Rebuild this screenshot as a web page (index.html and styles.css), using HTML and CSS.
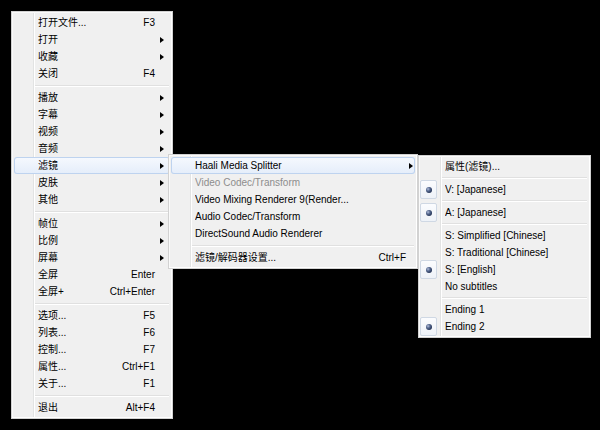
FILE: index.html
```html
<!DOCTYPE html>
<html lang="zh-CN">
<head>
<meta charset="utf-8">
<title>Menu</title>
<link rel="stylesheet" href="styles.css">
</head>
<body>
<div class="stage">
  <div class="menu menu-main">
    <div class="item"><span class="label">打开文件...</span><span class="key">F3</span><span class="sub"></span></div>
    <div class="item"><span class="label">打开</span><span class="key"></span><span class="sub"><i class="arrow"></i></span></div>
    <div class="item"><span class="label">收藏</span><span class="key"></span><span class="sub"><i class="arrow"></i></span></div>
    <div class="item"><span class="label">关闭</span><span class="key">F4</span><span class="sub"></span></div>
    <div class="sep"></div>
    <div class="item"><span class="label">播放</span><span class="key"></span><span class="sub"><i class="arrow"></i></span></div>
    <div class="item"><span class="label">字幕</span><span class="key"></span><span class="sub"><i class="arrow"></i></span></div>
    <div class="item"><span class="label">视频</span><span class="key"></span><span class="sub"><i class="arrow"></i></span></div>
    <div class="item"><span class="label">音频</span><span class="key"></span><span class="sub"><i class="arrow"></i></span></div>
    <div class="item hot"><span class="label">滤镜</span><span class="key"></span><span class="sub"><i class="arrow"></i></span></div>
    <div class="item"><span class="label">皮肤</span><span class="key"></span><span class="sub"><i class="arrow"></i></span></div>
    <div class="item"><span class="label">其他</span><span class="key"></span><span class="sub"><i class="arrow"></i></span></div>
    <div class="sep"></div>
    <div class="item"><span class="label">帧位</span><span class="key"></span><span class="sub"><i class="arrow"></i></span></div>
    <div class="item"><span class="label">比例</span><span class="key"></span><span class="sub"><i class="arrow"></i></span></div>
    <div class="item"><span class="label">屏幕</span><span class="key"></span><span class="sub"><i class="arrow"></i></span></div>
    <div class="item"><span class="label">全屏</span><span class="key">Enter</span><span class="sub"></span></div>
    <div class="item"><span class="label">全屏+</span><span class="key">Ctrl+Enter</span><span class="sub"></span></div>
    <div class="sep"></div>
    <div class="item"><span class="label">选项...</span><span class="key">F5</span><span class="sub"></span></div>
    <div class="item"><span class="label">列表...</span><span class="key">F6</span><span class="sub"></span></div>
    <div class="item"><span class="label">控制...</span><span class="key">F7</span><span class="sub"></span></div>
    <div class="item"><span class="label">属性...</span><span class="key">Ctrl+F1</span><span class="sub"></span></div>
    <div class="item"><span class="label">关于...</span><span class="key">F1</span><span class="sub"></span></div>
    <div class="sep"></div>
    <div class="item"><span class="label">退出</span><span class="key">Alt+F4</span><span class="sub"></span></div>
  </div>

  <div class="menu menu-filters">
    <div class="item hot"><span class="label">Haali Media Splitter</span><span class="key"></span><span class="sub"><i class="arrow"></i></span></div>
    <div class="item disabled"><span class="label">Video Codec/Transform</span><span class="key"></span><span class="sub"></span></div>
    <div class="item"><span class="label">Video Mixing Renderer 9(Render...</span><span class="key"></span><span class="sub"></span></div>
    <div class="item"><span class="label">Audio Codec/Transform</span><span class="key"></span><span class="sub"></span></div>
    <div class="item"><span class="label">DirectSound Audio Renderer</span><span class="key"></span><span class="sub"></span></div>
    <div class="sep"></div>
    <div class="item"><span class="label">滤镜/解码器设置...</span><span class="key">Ctrl+F</span><span class="sub"></span></div>
  </div>

  <div class="menu menu-streams">
    <div class="item"><span class="gut"></span><span class="label">属性(滤镜)...</span></div>
    <div class="sep"></div>
    <div class="item"><span class="gut"><span class="radio"><span class="dot"></span></span></span><span class="label">V: [Japanese]</span></div>
    <div class="sep"></div>
    <div class="item"><span class="gut"><span class="radio"><span class="dot"></span></span></span><span class="label">A: [Japanese]</span></div>
    <div class="sep"></div>
    <div class="item"><span class="gut"></span><span class="label">S: Simplified [Chinese]</span></div>
    <div class="item"><span class="gut"></span><span class="label">S: Traditional [Chinese]</span></div>
    <div class="item"><span class="gut"><span class="radio"><span class="dot"></span></span></span><span class="label">S: [English]</span></div>
    <div class="item"><span class="gut"></span><span class="label">No subtitles</span></div>
    <div class="sep"></div>
    <div class="item"><span class="gut"></span><span class="label">Ending 1</span></div>
    <div class="item"><span class="gut"><span class="radio"><span class="dot"></span></span></span><span class="label">Ending 2</span></div>
  </div>
</div>
</body>
</html>
```

FILE: styles.css
```css
* { box-sizing: border-box; }

html, body {
  margin: 0;
  padding: 0;
  background: #000;
}

.stage {
  position: relative;
  width: 600px;
  height: 430px;
  overflow: hidden;
  background: #000;
  padding: 11px 0 0 11px;
  font-family: "Liberation Sans", "Noto Sans CJK SC", sans-serif;
  font-size: 10px;
  color: #000;
}

.menu {
  --aw: 15px;
  --ap: 6px;
  --sep: 7px;
  display: flex;
  flex-direction: column;
  padding: 2px;
  border: 1px solid #d2d2d2;
  background-color: #f0f0f0;
  background-image: linear-gradient(to right,
    transparent 21px, #e2e3e3 21px, #e2e3e3 22px,
    #ffffff 22px, #ffffff 23px, transparent 23px);
  background-origin: padding-box;
  box-shadow: inset -1px -1px 0 #ffffff, inset 1px 1px 0 #fafafa;
}

.menu-main {
  width: 162px;
}

.menu-filters {
  --aw: 9px;
  --ap: 2px;
  position: absolute;
  left: 168px;
  top: 154px;
  width: 250px;
}

.menu-streams {
  --sep: 6px;
  position: absolute;
  left: 418px;
  top: 155px;
  width: 173px;
}

.item {
  display: flex;
  align-items: center;
  height: 17px;
  line-height: 17px;
  padding-left: 24px;
  white-space: nowrap;
  border-radius: 3px;
}

.menu-streams .item {
  padding-left: 0;
}

.item.hot {
  background: linear-gradient(to bottom, #f6f9fe, #e4edfa);
  box-shadow: inset 0 0 0 1px #bed3ef;
}

.item.disabled {
  color: #8d8d8d;
}

.label {
  flex: 1;
  overflow: hidden;
}

.key {
  flex: none;
  text-align: right;
}

.sub {
  flex: none;
  width: var(--aw);
  display: flex;
  justify-content: flex-end;
  align-items: center;
  padding-right: var(--ap);
}

.arrow {
  display: block;
  width: 0;
  height: 0;
  border-left: 4px solid #000;
  border-top: 3.5px solid transparent;
  border-bottom: 3.5px solid transparent;
}

.sep {
  height: var(--sep);
  margin: 0 1px 0 21px;
  background: linear-gradient(to bottom,
    transparent 3px, #e0e0e0 3px, #e0e0e0 4px,
    #ffffff 4px, #ffffff 5px, transparent 5px);
}

.menu-streams .sep {
  background: linear-gradient(to bottom,
    transparent 2px, #e0e0e0 2px, #e0e0e0 3px,
    #ffffff 3px, #ffffff 4px, transparent 4px);
}

.gut {
  flex: none;
  width: 24px;
  height: 17px;
  display: flex;
  align-items: center;
}

.radio {
  width: 17px;
  height: 19px;
  margin-left: -1px;
  border: 1px solid #cfd8e4;
  border-radius: 2px;
  background: linear-gradient(to bottom, #fbfcfe, #eef2f8);
  display: flex;
  align-items: center;
  justify-content: center;
}

.dot {
  width: 6px;
  height: 6px;
  border-radius: 50%;
  background: radial-gradient(circle at 35% 35%, #b4c0dc 0, #55688f 35%, #1b2a4c 80%);
}
```
